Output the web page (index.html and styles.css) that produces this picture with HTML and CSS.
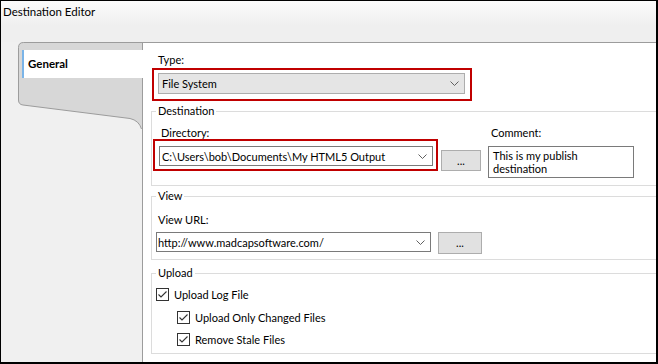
FILE: index.html
```html
<!DOCTYPE html>
<html lang="en">

<head>
    <meta charset="UTF-8">
    <meta name="viewport" content="width=device-width, initial-scale=1.0">
    <title>Destination Editor</title>
    <link rel="stylesheet" href="styles.css">
</head>

<body>
    <div class="window">
        <div class="titlebar">Destination Editor</div>

        <div class="main">
            <div class="sidebar">
                <svg class="tab-shape" width="124" height="90" viewBox="0 0 124 90">
                    <path d="M124 0 H5.5 Q0.5 0.5 0.5 5.5 V58 Q0.5 62.5 5 63 L112 76.5 Q121 78.5 124 87 Z" fill="#d7d7d7" />
                    <path d="M124 0.5 H5.5 Q0.5 0.5 0.5 5.5 V58 Q0.5 62.5 5 63 L112 76.5 Q121 78.5 123.5 87" fill="none" stroke="#9c9c9c" />
                </svg>
                <div class="tab active">General</div>
            </div>

            <div class="content">
                <div class="field-label type-label">Type:</div>
                <div class="highlight type-box">
                    <div class="combo combo-gray">
                        <span>File System</span>
                        <svg class="chevron" width="9" height="5" viewBox="0 0 9 5"><polyline points="0.5,0.5 4.5,4.5 8.5,0.5" /></svg>
                    </div>
                </div>

                <fieldset class="group dest">
                    <legend>Destination</legend>
                    <div class="dest-row">
                        <div class="dir-col">
                            <div class="field-label dir-label">Directory:</div>
                            <div class="highlight dir-box">
                                <div class="combo">
                                    <span>C:\Users\bob\Documents\My HTML5 Output</span>
                                    <svg class="chevron" width="9" height="5" viewBox="0 0 9 5"><polyline points="0.5,0.5 4.5,4.5 8.5,0.5" /></svg>
                                </div>
                            </div>
                        </div>
                        <button class="browse dir-browse">...</button>
                        <div class="comment-col">
                            <div class="field-label comment-label">Comment:</div>
                            <div class="memo">This is my publish destination</div>
                        </div>
                    </div>
                </fieldset>

                <fieldset class="group view">
                    <legend>View</legend>
                    <div class="field-label url-label">View URL:</div>
                    <div class="url-row">
                        <div class="combo url-combo">
                            <span>http://www.madcapsoftware.com/</span>
                            <svg class="chevron" width="9" height="5" viewBox="0 0 9 5"><polyline points="0.5,0.5 4.5,4.5 8.5,0.5" /></svg>
                        </div>
                        <button class="browse url-browse">...</button>
                    </div>
                </fieldset>

                <fieldset class="group upload">
                    <legend>Upload</legend>
                    <div class="check">
                        <svg class="box" width="13" height="13" viewBox="0 0 13 13"><rect x="0.5" y="0.5" width="12" height="12" /><polyline points="2.5,6.5 5,9 10.5,3.5" /></svg>
                        <span>Upload Log File</span>
                    </div>
                    <div class="check sub first-sub">
                        <svg class="box" width="13" height="13" viewBox="0 0 13 13"><rect x="0.5" y="0.5" width="12" height="12" /><polyline points="2.5,6.5 5,9 10.5,3.5" /></svg>
                        <span>Upload Only Changed Files</span>
                    </div>
                    <div class="check sub">
                        <svg class="box" width="13" height="13" viewBox="0 0 13 13"><rect x="0.5" y="0.5" width="12" height="12" /><polyline points="2.5,6.5 5,9 10.5,3.5" /></svg>
                        <span>Remove Stale Files</span>
                    </div>
                </fieldset>
            </div>
        </div>
    </div>
</body>

</html>
```

FILE: styles.css
```css
* {
    margin: 0;
    padding: 0;
    box-sizing: border-box;
}
body {
    font-family: Lato, "Liberation Sans", sans-serif;
    font-size: 11px;
    color: #000;
    background: #fff;
}
.window {
    width: 658px;
    height: 364px;
    border: 1px solid #000;
    border-right-width: 2px;
    border-bottom-width: 2px;
    display: flex;
    flex-direction: column;
    overflow: hidden;
}
.titlebar {
    height: 41px;
    padding: 3px 0 0 2px;
    font-size: 11.5px;
    line-height: 16px;
    background: linear-gradient(#fbfbfb, #efefef 60%);
}
.main {
    flex: 1;
    display: flex;
}

/* left tab strip */
.sidebar {
    position: relative;
    width: 142px;
    background: #f0f0f0;
    border-right: 1px solid #9c9c9c;
    padding-top: 8px;
}
.tab-shape {
    position: absolute;
    left: 17px;
    top: 0;
}
.tab {
    position: relative;
    height: 28px;
    line-height: 28px;
    margin-left: 21px;
    margin-right: -1px;
    padding-left: 4px;
    font-weight: bold;
    font-size: 11.5px;
    background: #fff;
    border-left: 2px solid #7ab4e8;
}

/* right panel */
.content {
    flex: 1;
    border-top: 1px solid #9c9c9c;
    padding: 10px 0 0 8px;
}
.field-label {
    line-height: 13px;
    height: 13px;
}
.type-label {
    margin-left: 7px;
    line-height: 14px;
    height: 14px;
}
.highlight {
    border: 2px solid #c00000;
}
.type-box {
    width: 320px;
    margin: 1px 0 0 1px;
    padding: 3px 5px 5px 4px;
}
.combo {
    display: flex;
    align-items: center;
    justify-content: space-between;
    height: 20px;
    padding: 0 5px 0 2px;
    background: #fff;
    border: 1px solid #7a7a7a;
}
.combo-gray {
    height: 21px;
    padding-left: 3px;
    background: #e5e5e5;
    border-color: #adadad;
}
.chevron polyline {
    fill: none;
    stroke: #606060;
    stroke-width: 1;
}

.group {
    border: 1px solid #dcdcdc;
    border-right: none;
    padding-left: 4px;
}
.group legend {
    line-height: 14px;
    padding: 0 2px;
}
.dest {
    margin-top: 3px;
    padding: 8px 0 7px 1px;
}
.dest legend {
    margin-left: 3px;
}
.dest-row {
    display: flex;
    align-items: flex-start;
}
.dir-label {
    margin-left: 8px;
}
.dir-box {
    width: 285px;
    padding: 5px 3px 3px 4px;
}
.browse {
    font-family: inherit;
    font-size: 11px;
    color: #000;
    background: #e1e1e1;
    border: 1px solid #adadad;
    line-height: 14px;
}
.dir-browse {
    width: 40px;
    height: 21px;
    margin: 24px 0 0 3px;
}
.comment-col {
    margin-left: 7px;
}
.comment-label {
    padding-left: 3px;
}
.memo {
    width: 146px;
    height: 32px;
    margin-top: 7px;
    padding: 2px 4px;
    line-height: 13px;
    border: 1px solid #7a7a7a;
}

.view {
    margin-top: 3px;
    padding: 10px 0 5px 4px;
}
.url-label {
    margin-left: 2px;
}
.url-row {
    display: flex;
    align-items: flex-start;
    margin-top: 6px;
}
.url-combo {
    width: 275px;
    padding-left: 1px;
}
.url-browse {
    width: 44px;
    height: 22px;
    margin-left: 7px;
}

.upload {
    margin-top: 6px;
    padding: 8px 0 7px 4px;
}
.check {
    display: flex;
    align-items: center;
    height: 13px;
    line-height: 13px;
}
.check span {
    margin-left: 5px;
}
.check.sub {
    margin: 9px 0 0 21px;
}
.check.first-sub {
    margin-top: 10px;
}
.box rect {
    fill: #fff;
    stroke: #333;
}
.box polyline {
    fill: none;
    stroke: #333;
    stroke-width: 1.1;
}
```
